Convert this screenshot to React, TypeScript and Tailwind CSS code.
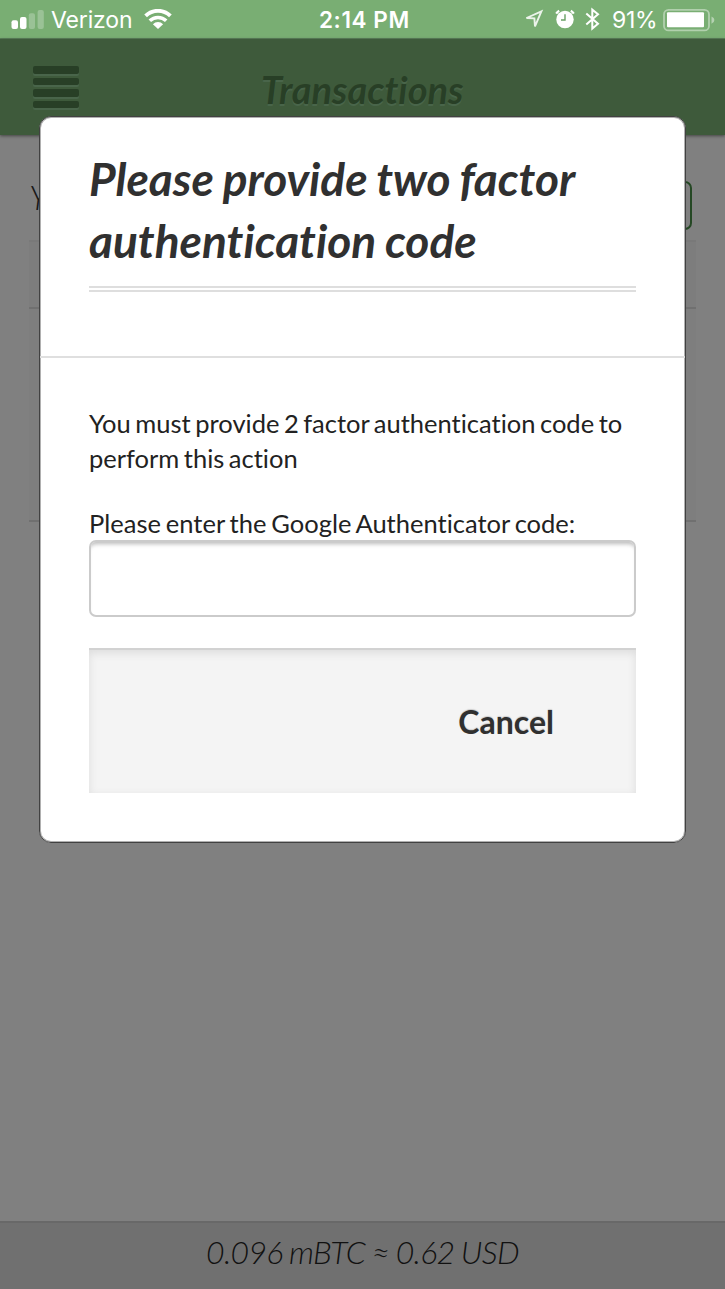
import React from "react";

function Signal() {
  return (
    <svg width="34" height="20" viewBox="0 0 34 20" fill="#fff" className="block">
      <rect x="0.5" y="11.2" width="6.5" height="8.8" rx="2" />
      <rect x="9" y="8" width="6.5" height="12" rx="2" />
      <rect x="17.8" y="4.3" width="6.2" height="15.7" rx="2" opacity=".25" />
      <rect x="26.6" y="1" width="6.2" height="19" rx="2" opacity=".25" />
    </svg>
  );
}

function Wifi() {
  return (
    <svg width="28" height="20" viewBox="0 0 28 20" className="block">
      <path d="M1.6 6.9 A17.5 17.5 0 0 1 26.4 6.9" fill="none" stroke="#fff" strokeWidth="3.8" />
      <path d="M5.8 11.8 A11.6 11.6 0 0 1 22.2 11.8" fill="none" stroke="#fff" strokeWidth="3.5" />
      <path d="M8.9 15.2 A7.2 7.2 0 0 1 19.1 15.2 L14 20 Z" fill="#fff" />
    </svg>
  );
}

function LocationArrow() {
  return (
    <svg width="20" height="22" viewBox="0 0 20 22" className="block">
      <path d="M2.5 10 L17.4 3.4 L11 18.4 L10.4 10.4 Z" fill="none" stroke="#fff" strokeOpacity=".85" strokeWidth="1.9" />
    </svg>
  );
}

function Alarm() {
  return (
    <svg width="20" height="20" viewBox="0 0 20 20" className="block">
      <circle cx="10" cy="10.5" r="8.7" fill="#fff" />
      <path d="M10 5.2 V11 H6" fill="none" stroke="#68a064" strokeWidth="1.4" />
      <path d="M1.2 4.6 A9 9 0 0 1 4.2 1.7 M15.8 1.7 A9 9 0 0 1 18.8 4.6" fill="none" stroke="#fff" strokeWidth="2.2" />
    </svg>
  );
}

function Bluetooth() {
  return (
    <svg width="15" height="24" viewBox="0 0 15 24" className="block">
      <path d="M1.3 6.6 L13 16.8 L7.3 21.6 V2.6 L13 7.2 L1.3 17.4" fill="none" stroke="#fff" strokeWidth="2" />
    </svg>
  );
}

function Battery() {
  return (
    <svg width="52" height="24" viewBox="0 0 52 24" className="block">
      <rect x="1" y="1.9" width="45" height="20.5" rx="4.5" fill="none" stroke="#fff" strokeOpacity=".42" strokeWidth="1.8" />
      <rect x="4" y="4.2" width="37" height="15" rx="1" fill="#fff" />
      <path d="M48.5 8.4 Q51.4 9.4 51.4 12.1 Q51.4 14.8 48.5 15.8 Z" fill="#fff" opacity=".45" />
    </svg>
  );
}

function StatusBar() {
  return (
    <div className="flex h-[39px] items-start border-b border-[#588057] bg-[#79ae73] font-[Inter,sans-serif] text-white">
      <div className="flex w-[319px] items-start pl-[11px]">
        <div className="mt-[9px]"><Signal /></div>
        <span className="ml-[6px] mt-[5px] w-[81px] whitespace-nowrap text-[23px] leading-[30px] tracking-[-0.15px]">Verizon</span>
        <div className="ml-[12px] mt-[9px]"><Wifi /></div>
      </div>
      <span className="mt-[5px] w-[205px] whitespace-nowrap text-[22.5px] font-semibold leading-[30px] tracking-[0.6px]">2:14 PM</span>
      <div className="mt-[8px]"><LocationArrow /></div>
      <div className="ml-[11px] mt-[9px]"><Alarm /></div>
      <div className="ml-[10px] mt-[7px]"><Bluetooth /></div>
      <span className="ml-[12px] mt-[5px] w-[51px] whitespace-nowrap text-[23px] leading-[30px] tracking-[-0.3px]">91%</span>
      <div className="mt-[8px]"><Battery /></div>
    </div>
  );
}

function TopNav() {
  return (
    <header className="flex h-[96px] items-start bg-[#3e5a3b] shadow-[0_1px_3px_#444]">
      <div className="ml-[33px] mt-[27px] flex w-[46px] flex-col gap-[4px]">
        {[0, 1, 2, 3].map((i) => (
          <div key={i} className="h-[7.6px] rounded-[2px] bg-[#283f26] shadow-[0_2px_0_#49654a]" />
        ))}
      </div>
      <h1 className="ml-[182px] mt-[26px] font-[Lato,sans-serif] text-[38px] font-bold italic leading-[48px] text-[#283f26] [text-shadow:0_2px_0_#49654a]">
        Transactions
      </h1>
    </header>
  );
}

function Modal() {
  return (
    <div className="absolute left-[39px] top-[116px] flex h-[727px] w-[647px] flex-col rounded-[12px] border border-[#414141] bg-white shadow-[inset_0_0_0_1px_#b0b0b0]">
      <div className="h-[241px] border-b-2 border-[#dfdfdf] px-[49px] pt-[31px]">
        <h2 className="whitespace-nowrap text-[46px] font-bold italic leading-[62px] text-[#303030] [word-spacing:-1.3px]">
          Please provide two factor<br />authentication code
        </h2>
        <div className="mt-[14px] h-[6px] border-y-2 border-[#dedede]" />
      </div>
      <div className="px-[49px] pt-[48px] text-[25.5px] leading-[35px] text-[#222] [word-spacing:-2px]">
        <p className="whitespace-nowrap">
          You must provide 2 factor authentication code to<br />perform this action
        </p>
        <label className="mt-[30px] block whitespace-nowrap [word-spacing:-1.6px]">Please enter the Google Authenticator code:</label>
        <input className="-mt-px block h-[77px] w-full rounded-[7px] border-2 border-[#cbcbcb] bg-white px-4 shadow-[inset_0_5px_4px_-3px_#bbb] outline-none" />
        <div className="mt-[31px] flex h-[145px] justify-end border-t-2 border-[#d2d2d2] bg-[#f4f4f4] pr-[82px] pt-[50px] shadow-[inset_0_3px_8px_#dcdcdc]">
          <button className="h-[44px] text-[32px] font-bold leading-[44px] text-[#303030] [text-shadow:0_-1px_1px_#ccc]">Cancel</button>
        </div>
      </div>
    </div>
  );
}

export default function App() {
  return (
    <div className="relative flex h-[1289px] w-[725px] flex-col overflow-hidden bg-[#808080] font-[Lato,sans-serif] [font-variant-ligatures:none]">
      <StatusBar />
      <TopNav />
      <main className="flex flex-1 flex-col px-[29px] pt-[46px]">
        <div className="flex h-[59px] justify-between pr-[4px]">
          <span className="-mt-px text-[34px] font-light italic leading-[34px] text-[#181818]">Y</span>
          <div className="h-[49px] w-[60px] rounded-[7px] border-2 border-[#254824]" />
        </div>
        <div className="h-[69px] border-y-2 border-t-[#797979] border-b-[#707070] bg-[#7d7d7d]" />
        <div className="h-[213px] border-b-2 border-[#707070] bg-[#7e7e7e]" />
      </main>
      <footer className="flex h-[68px] justify-center whitespace-nowrap border-t-2 border-[#686868] bg-[#707070] pt-[7px] text-[32px] font-light italic leading-[44px] tracking-[-0.7px] text-[#111] [word-spacing:-1px]">
        0.096 mBTC ≈ 0.62 USD
      </footer>
      <Modal />
    </div>
  );
}
